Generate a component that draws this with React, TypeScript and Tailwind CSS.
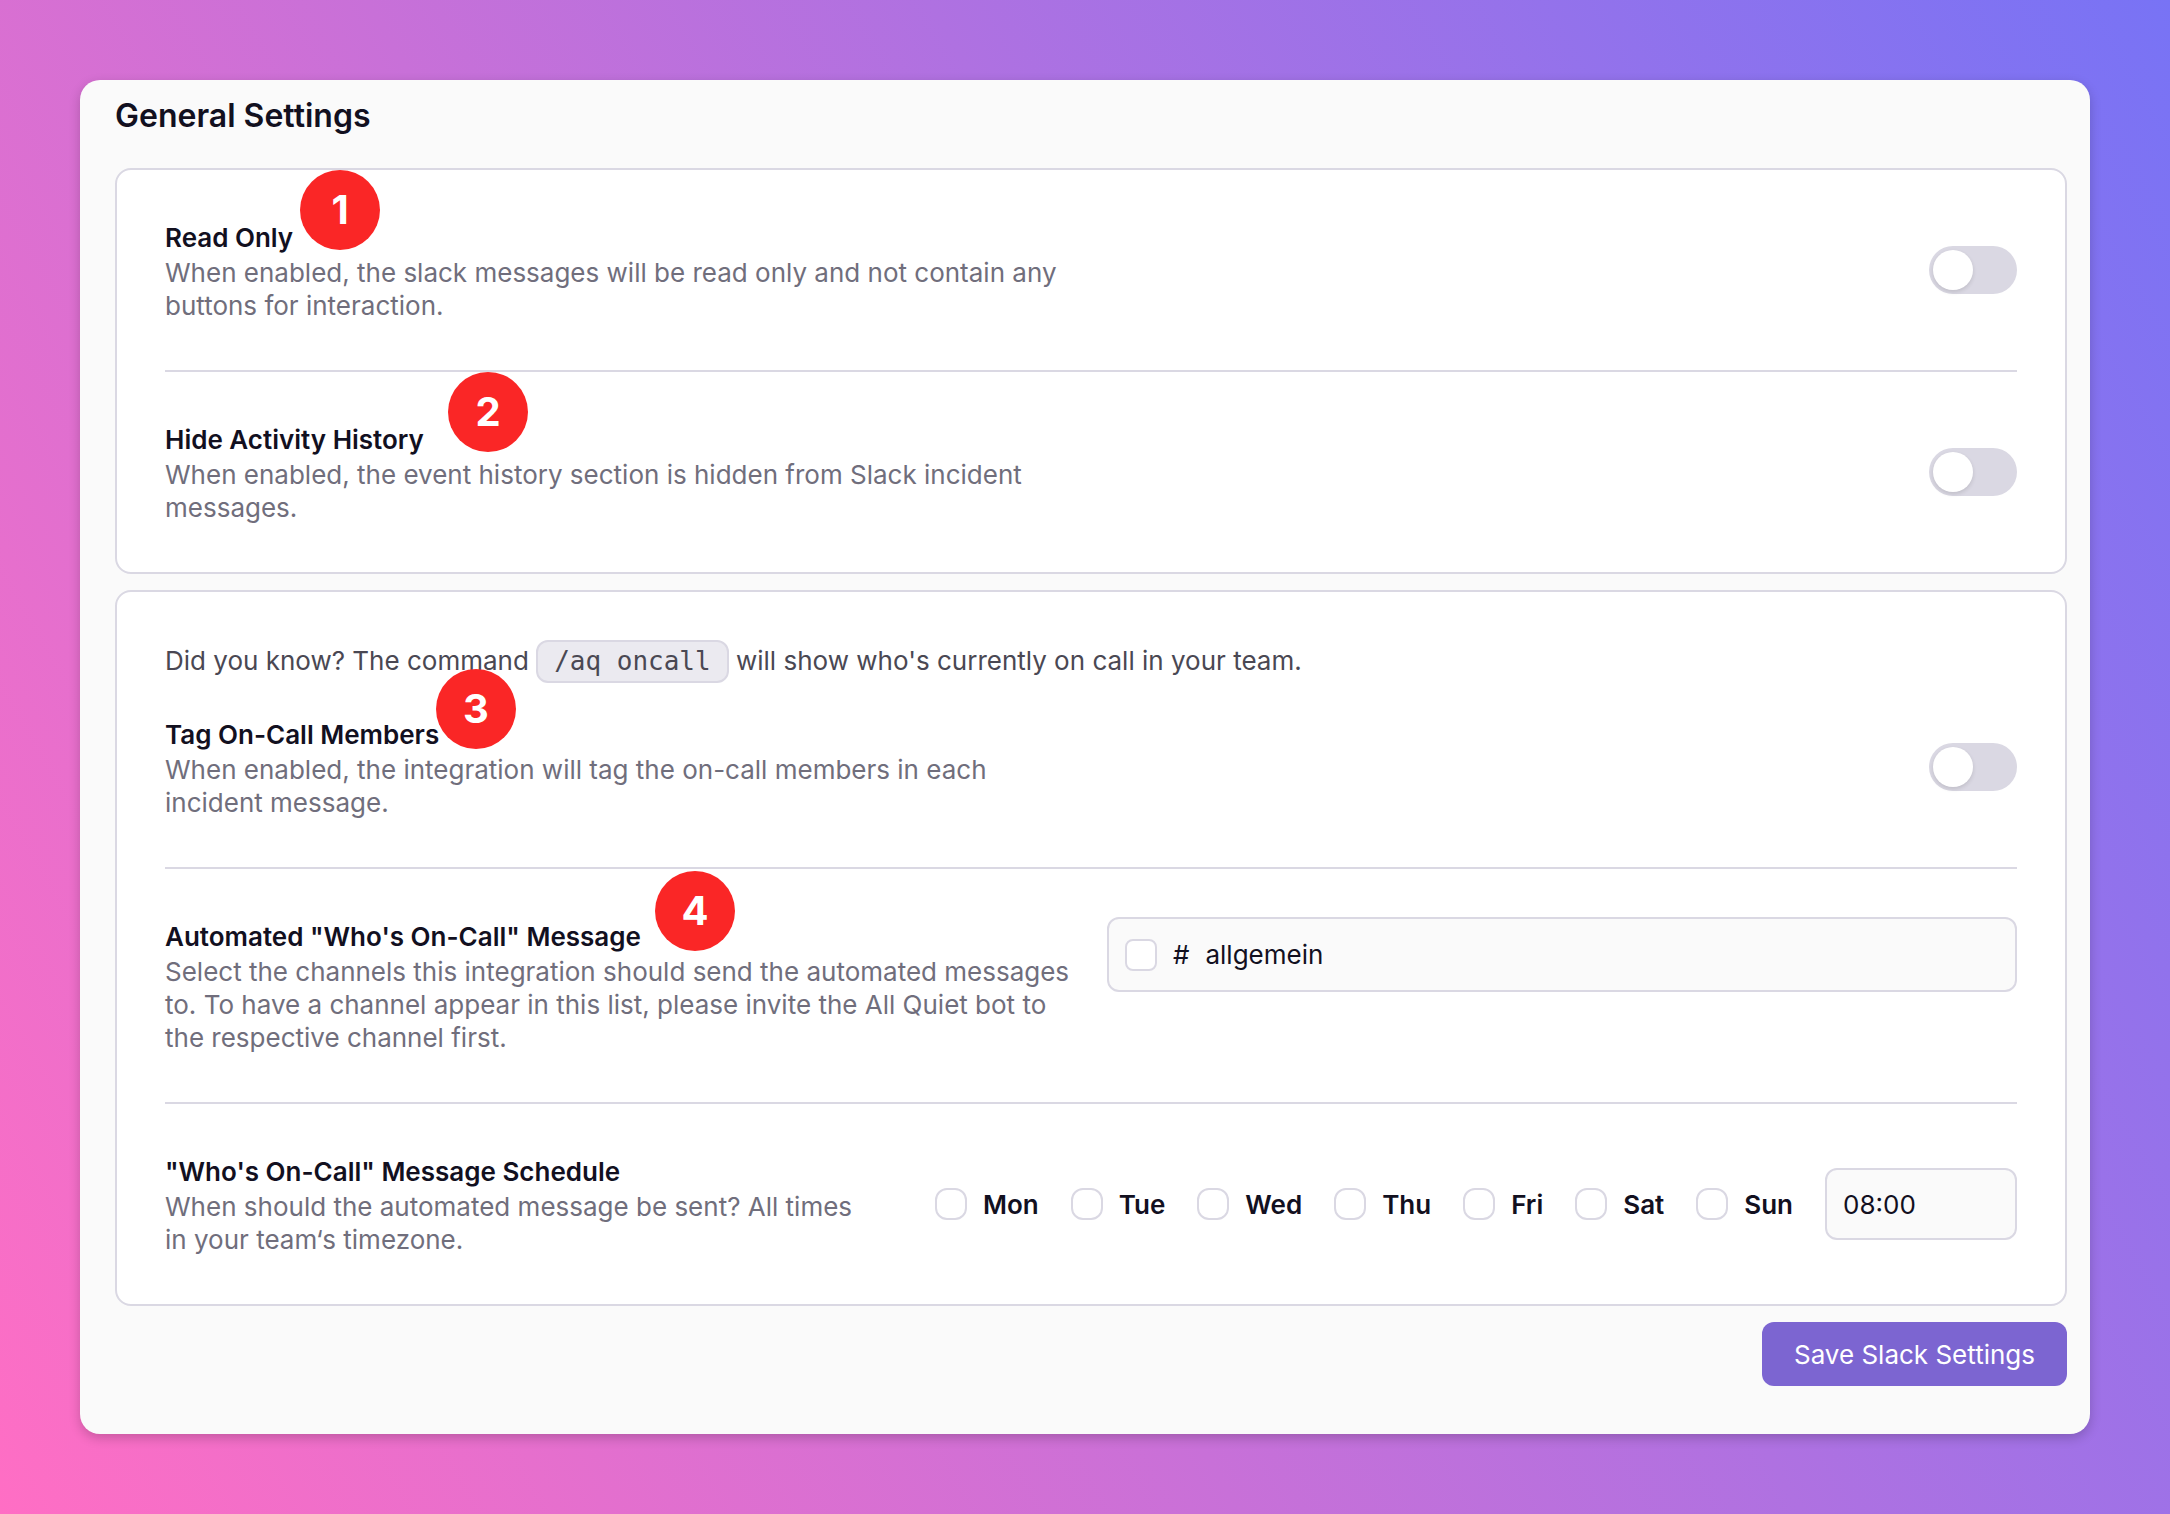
import { useState } from "react";

const days = ["Mon", "Tue", "Wed", "Thu", "Fri", "Sat", "Sun"];

function Card({ children }: { children: React.ReactNode }) {
  return (
    <section className="bg-white border-2 border-[#dad8e3] rounded-2xl p-12">{children}</section>
  );
}

function Divider() {
  return <hr className="border-t-2 border-[#dad8e3] my-12" />;
}

function Badge({ n, className }: { n: number; className: string }) {
  return (
    <span
      className={`absolute flex size-20 items-center justify-center rounded-full bg-[#fa2626] text-[40px] font-bold text-white ${className}`}
    >
      {n}
    </span>
  );
}

function Info({ title, text, htmlFor }: { title: string; text: string; htmlFor?: string }) {
  return (
    <div>
      {htmlFor ? (
        <label htmlFor={htmlFor} className="block pt-0.5 font-semibold leading-9">{title}</label>
      ) : (
        <h3 className="pt-0.5 font-semibold leading-9">{title}</h3>
      )}
      <p className="leading-[33px] text-[#706e7c]">{text}</p>
    </div>
  );
}

function Toggle({ id }: { id: string }) {
  const [on, setOn] = useState(false);
  return (
    <input
      id={id}
      type="checkbox"
      role="switch"
      checked={on}
      onChange={(e) => setOn(e.target.checked)}
      className="h-12 w-22 shrink-0 cursor-pointer appearance-none justify-self-end rounded-full bg-[#dad8e3] p-1 transition before:block before:size-10 before:rounded-full before:bg-white before:shadow-[0_2px_4px_rgba(0,0,0,0.12)] before:transition checked:bg-[#7c65d1] checked:before:translate-x-10"
    />
  );
}

function ToggleRow({ id, title, text, children }: { id: string; title: string; text: string; children?: React.ReactNode }) {
  return (
    <div className="relative grid grid-cols-2 items-center gap-8">
      <Info htmlFor={id} title={title} text={text} />
      <Toggle id={id} />
      {children}
    </div>
  );
}

export default function App() {
  const [time, setTime] = useState("08:00");

  return (
    <div className="min-h-screen bg-[linear-gradient(60deg,#ff6ec4,#7873f5)] p-20 font-[Inter,sans-serif] text-[26px] text-[#12101f]">
      <form
        onSubmit={(e) => e.preventDefault()}
        className="rounded-[20px] bg-[#fafafa] pt-4 pr-[23px] pb-12 pl-[35px] shadow-[0_4px_12px_rgba(0,0,0,0.2)]"
      >
        <h2 className="mb-8 text-[32px] leading-10 font-semibold">General Settings</h2>

        <div className="flex flex-col gap-4">
          <Card>
            <ToggleRow
              id="read-only"
              title="Read Only"
              text="When enabled, the slack messages will be read only and not contain any buttons for interaction."
            >
              <Badge n={1} className="-top-12 left-[135px]" />
            </ToggleRow>
            <Divider />
            <ToggleRow
              id="hide-history"
              title="Hide Activity History"
              text="When enabled, the event history section is hidden from Slack incident messages."
            >
              <Badge n={2} className="-top-12 left-[283px]" />
            </ToggleRow>
          </Card>

          <Card>
            <p className="mb-8 leading-[33px] text-[#4a4853]">
              Did you know? The command{" "}
              <code className="inline-block rounded-xl border-2 border-[#dad8e3] bg-[#ebeaf0] px-4 font-['DejaVu_Sans_Mono',monospace] leading-[39px]">
                /aq oncall
              </code>{" "}
              will show who's currently on call in your team.
            </p>
            <ToggleRow
              id="tag-members"
              title="Tag On-Call Members"
              text="When enabled, the integration will tag the on-call members in each incident message."
            >
              <Badge n={3} className="-top-[46px] left-[271px]" />
            </ToggleRow>
            <Divider />
            <div className="relative grid grid-cols-2 items-start gap-8">
              <Info
                title={'Automated "Who\'s On-Call" Message'}
                text="Select the channels this integration should send the automated messages to. To have a channel appear in this list, please invite the All Quiet bot to the respective channel first."
              />
              <div className="rounded-xl border-2 border-[#dad8e3] bg-[#fafafa] px-4 py-4">
                <label className="flex items-center gap-4">
                  <input
                    type="checkbox"
                    className="size-8 appearance-none rounded-lg border-2 border-[#dad8e3] bg-white checked:bg-[#7c65d1]"
                  />
                  <span>#</span>
                  <span>allgemein</span>
                </label>
              </div>
              <Badge n={4} className="-top-[46px] left-[490px]" />
            </div>
            <Divider />
            <div className="flex items-center justify-between gap-8">
              <div className="max-w-[700px]">
                <Info
                  title={'"Who\'s On-Call" Message Schedule'}
                  text="When should the automated message be sent? All times in your team‘s timezone."
                />
              </div>
              <div className="flex shrink-0 items-center gap-8">
                {days.map((day) => (
                  <label key={day} className="flex items-center gap-4 font-semibold">
                    <input
                      type="checkbox"
                      className="size-8 appearance-none rounded-xl border-2 border-[#dad8e3] bg-white checked:bg-[#7c65d1]"
                    />
                    {day}
                  </label>
                ))}
                <input
                  type="text"
                  aria-label="Time"
                  value={time}
                  onChange={(e) => setTime(e.target.value)}
                  className="h-18 w-48 rounded-xl border-2 border-[#dad8e3] bg-[#fafafa] px-4 focus:outline-none"
                />
              </div>
            </div>
          </Card>

          <button
            type="submit"
            className="h-16 cursor-pointer self-end rounded-xl bg-[#7c65d1] px-8 text-white hover:bg-[#6d56c4]"
          >
            Save Slack Settings
          </button>
        </div>
      </form>
    </div>
  );
}
